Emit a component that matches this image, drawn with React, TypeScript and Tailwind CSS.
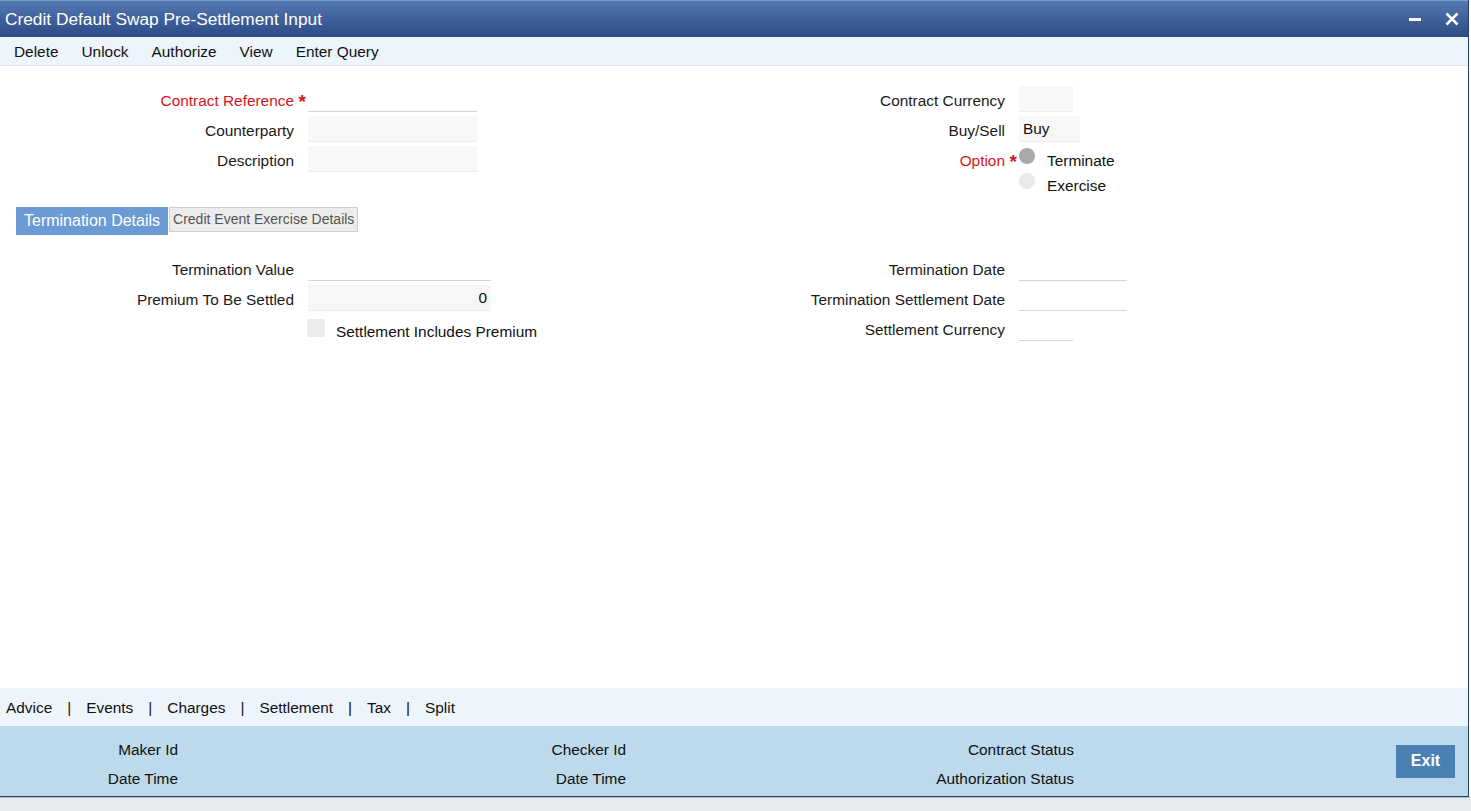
import React from "react";

const font = { fontFamily: '"Liberation Sans", Arial, sans-serif' };

function Label({ children, red, w }: { children: React.ReactNode; red?: boolean; w: string }) {
  return (
    <div className={`${w} shrink-0 text-right pt-[3px] ${red ? "text-[#d7141d]" : "text-[#1a1a1a]"}`}>
      {children}
    </div>
  );
}

function Star() {
  return <span className="absolute -right-[12px] -top-[4px] text-[#d7141d] text-[19px] font-bold">*</span>;
}

export default function App() {
  const menu = ["Delete", "Unlock", "Authorize", "View", "Enter Query"];
  const links = ["Advice", "Events", "Charges", "Settlement", "Tax", "Split"];

  return (
    <div className="w-[1471px] h-[811px] bg-white flex flex-col text-[15.4px] overflow-hidden" style={font}>
      <div className="w-[1469px] h-[797px] flex flex-col border-r border-b border-[#22406f]">
        {/* Title bar */}
        <div className="h-[37px] shrink-0 flex items-center justify-between bg-gradient-to-b from-[#5479b1] to-[#2c4b86] border-t border-[#7d9bc8]">
          <span className="pl-[5px] pt-[1px] text-white text-[17.3px]">Credit Default Swap Pre-Settlement Input</span>
          <div className="flex items-center gap-[24px] pr-[9px]">
            <svg width="12" height="12" viewBox="0 0 12 12">
              <rect x="0" y="5" width="12" height="3" fill="white" />
            </svg>
            <svg width="14" height="14" viewBox="0 0 14 14">
              <path d="M1.5 1.5 L12.5 12.5 M12.5 1.5 L1.5 12.5" stroke="white" strokeWidth="2.6" />
            </svg>
          </div>
        </div>

        {/* Menu */}
        <div className="h-[29px] shrink-0 flex items-center gap-[23px] pl-[14px] pt-[2px] bg-[#eef4fc] border-b border-[#dfe6ee] text-[#111]">
          {menu.map((m) => (
            <span key={m}>{m}</span>
          ))}
        </div>

        {/* Body */}
        <div className="flex-1 bg-white pt-[18px]">
          <div className="flex items-start">
            <div className="w-[760px] flex flex-col">
              <div className="h-[30px] flex items-center">
                <Label w="w-[294px]" red>
                  <span className="relative">Contract Reference<Star /></span>
                </Label>
                <div className="ml-[14px] w-[169px] h-[26px] border-b border-[#d4d4d4]" />
              </div>
              <div className="h-[30px] flex items-center">
                <Label w="w-[294px]">Counterparty</Label>
                <div className="ml-[14px] w-[169px] h-[26px] bg-[#f7f7f7] border-b border-[#ececec]" />
              </div>
              <div className="h-[30px] flex items-center">
                <Label w="w-[294px]">Description</Label>
                <div className="ml-[14px] w-[169px] h-[26px] bg-[#f7f7f7] border-b border-[#ececec]" />
              </div>
            </div>
            <div className="flex flex-col">
              <div className="h-[30px] flex items-center">
                <Label w="w-[245px]">Contract Currency</Label>
                <div className="ml-[14px] w-[54px] h-[26px] bg-[#f7f7f7] border-b border-[#ececec]" />
              </div>
              <div className="h-[30px] flex items-center">
                <Label w="w-[245px]">Buy/Sell</Label>
                <div className="ml-[14px] w-[61px] h-[26px] bg-[#f7f7f7] border-b border-[#ececec] pl-[4px] flex items-center text-[#111]">
                  Buy
                </div>
              </div>
              <div className="h-[25px] flex items-center">
                <div className="w-[245px] shrink-0 text-right pt-[8px] text-[#d7141d]">
                  <span className="relative">Option<Star /></span>
                </div>
                <div className="ml-[14px] flex items-center">
                  <span className="w-[16px] h-[16px] rounded-full bg-[#a9a9a9] -mt-[1px]" />
                  <span className="ml-[12px] pt-[8px] text-[#111]">Terminate</span>
                </div>
              </div>
              <div className="h-[25px] flex items-center">
                <div className="w-[245px]" />
                <div className="ml-[14px] flex items-center">
                  <span className="w-[16px] h-[16px] rounded-full bg-[#e9e9e9] -mt-[1px]" />
                  <span className="ml-[12px] pt-[9px] text-[#111]">Exercise</span>
                </div>
              </div>
            </div>
          </div>

          {/* Tabs */}
          <div className="flex items-start ml-[16px] mt-[13px]">
            <div className="h-[28px] px-[8px] flex items-center bg-[#6b9ad4] text-white text-[16px]">
              Termination Details
            </div>
            <div className="ml-[1px] h-[25px] px-[3px] flex items-center bg-[#ececec] border border-[#cfcfcf] text-[#555] text-[14px]">
              Credit Event Exercise Details
            </div>
          </div>

          {/* Termination details */}
          <div className="flex items-start mt-[18px]">
            <div className="w-[760px] flex flex-col">
              <div className="h-[30px] flex items-center">
                <Label w="w-[294px]">Termination Value</Label>
                <div className="ml-[14px] w-[183px] h-[26px] border-b border-[#d4d4d4]" />
              </div>
              <div className="h-[30px] flex items-center">
                <Label w="w-[294px]">Premium To Be Settled</Label>
                <div className="ml-[14px] w-[183px] h-[26px] bg-[#f7f7f7] border-b border-[#ececec] flex items-center justify-end pr-[4px] text-[#111]">
                  0
                </div>
              </div>
              <div className="h-[30px] flex items-center">
                <div className="w-[294px]" />
                <span className="ml-[13px] w-[18px] h-[18px] bg-[#ececec] -mt-[1px]" />
                <span className="ml-[11px] pt-[7px] text-[#111]">Settlement Includes Premium</span>
              </div>
            </div>
            <div className="flex flex-col">
              <div className="h-[30px] flex items-center">
                <Label w="w-[245px]">Termination Date</Label>
                <div className="ml-[14px] w-[108px] h-[26px] border-b border-[#d4d4d4]" />
              </div>
              <div className="h-[30px] flex items-center">
                <Label w="w-[245px]">Termination Settlement Date</Label>
                <div className="ml-[14px] w-[108px] h-[26px] border-b border-[#d4d4d4]" />
              </div>
              <div className="h-[30px] flex items-center">
                <Label w="w-[245px]">Settlement Currency</Label>
                <div className="ml-[14px] w-[54px] h-[26px] border-b border-[#d4d4d4]" />
              </div>
            </div>
          </div>
        </div>

        {/* Bottom links */}
        <div className="h-[38px] shrink-0 flex items-center pl-[6px] pt-[2px] bg-[#eef4fc] text-[#111]">
          {links.map((l, i) => (
            <React.Fragment key={l}>
              {i > 0 && <span className="mx-[15px]">|</span>}
              <span>{l}</span>
            </React.Fragment>
          ))}
        </div>

        {/* Footer */}
        <div className="h-[70px] shrink-0 flex items-center bg-[#bdd9ec] text-[#111]">
          <div className="w-[178px] text-right flex flex-col gap-[7px] leading-[22px] pt-[6px]">
            <span>Maker Id</span>
            <span>Date Time</span>
          </div>
          <div className="w-[448px] text-right flex flex-col gap-[7px] leading-[22px] pt-[6px]">
            <span>Checker Id</span>
            <span>Date Time</span>
          </div>
          <div className="w-[448px] text-right flex flex-col gap-[7px] leading-[22px] pt-[6px]">
            <span>Contract Status</span>
            <span>Authorization Status</span>
          </div>
          <button className="ml-auto mr-[13px] w-[59px] h-[33px] bg-[#4a81b3] text-white font-bold text-[16px]">
            Exit
          </button>
        </div>
      </div>
      <div className="flex-1 bg-[#e6e9ed] border-t border-[#b9bec4]" />
    </div>
  );
}
